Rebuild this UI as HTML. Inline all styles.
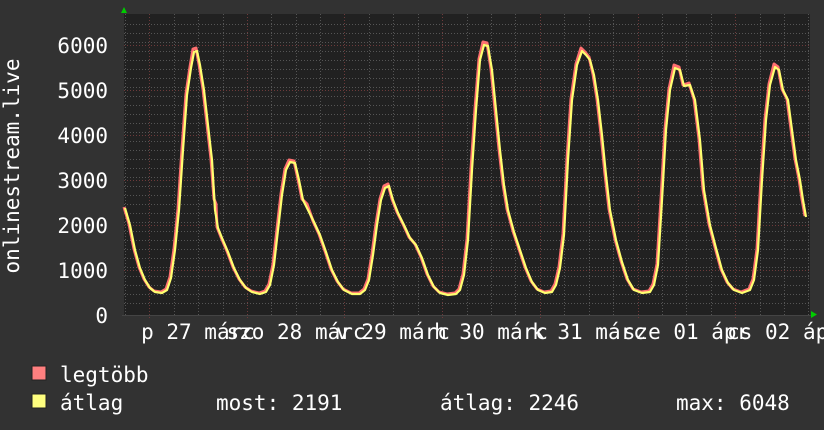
<!DOCTYPE html>
<html><head><meta charset="utf-8"><style>
html,body{margin:0;padding:0;background:#333;}
svg{display:block}
text{font-family:"DejaVu Sans Mono","Liberation Mono",monospace;font-size:21px;fill:#fff;}
</style></head><body>
<svg width="824" height="430" viewBox="0 0 824 430" xmlns="http://www.w3.org/2000/svg">
<rect width="824" height="430" fill="#323232"/>
<rect x="124" y="14" width="686" height="301" fill="#212121"/>
<g stroke="#555" stroke-width="1" stroke-dasharray="1,2" shape-rendering="crispEdges">
<path d="M124 24.5H810M124 33.5H810M124 42.5H810M124 51.5H810M124 60.5H810M124 69.5H810M124 78.5H810M124 87.5H810M124 96.5H810M124 105.5H810M124 114.5H810M124 123.5H810M124 132.5H810M124 141.5H810M124 150.5H810M124 159.5H810M124 168.5H810M124 177.5H810M124 186.5H810M124 195.5H810M124 204.5H810M124 213.5H810M124 222.5H810M124 231.5H810M124 240.5H810M124 249.5H810M124 258.5H810M124 267.5H810M124 276.5H810M124 285.5H810M124 294.5H810M124 303.5H810"/>
<path d="M125.5 14V315M174.5 14V315M198.5 14V315M223.5 14V315M271.5 14V315M296.5 14V315M320.5 14V315M369.5 14V315M393.5 14V315M418.5 14V315M467.5 14V315M491.5 14V315M515.5 14V315M564.5 14V315M589.5 14V315M613.5 14V315M662.5 14V315M686.5 14V315M711.5 14V315M760.5 14V315M784.5 14V315M808.5 14V315"/>
</g>
<g stroke="#6e3a3a" stroke-width="1" stroke-dasharray="1,2" shape-rendering="crispEdges">
<path d="M124 45.5H810M124 90.5H810M124 135.5H810M124 180.5H810M124 225.5H810M124 270.5H810"/>
<path d="M149.5 14V318M247.5 14V318M344.5 14V318M442.5 14V318M540.5 14V318M638.5 14V318M735.5 14V318"/>
</g>
<line x1="122" y1="315.5" x2="812" y2="315.5" stroke="#444"/>
<polygon points="121,13 127,13 124,7" fill="#0c0"/>
<polygon points="811,311 811,318 817,314.5" fill="#0c0"/>
<g fill="none" stroke-linejoin="round">
<polyline stroke="#ff7070" stroke-width="3" transform="translate(-1,-1)" points="125,208 130,225 135,250 140,268 145,280 150,288 155,292 162,293 167,290 171,278 175,250 179,210 183,150 187,95 191,68 194,50 197,49 200,65 204,90 208,125 212,160 215,200 217,205 218,228 222,238 228,252 234,268 240,280 246,288 252,292 260,294 266,292 270,285 274,265 278,230 282,195 286,170 290,161 295,162 299,180 303,200 308,205 314,222 320,235 326,252 332,270 338,282 344,290 352,294 360,294 365,290 369,280 373,255 377,225 381,200 385,187 389,185 393,200 398,213 404,225 410,238 416,245 422,258 428,275 434,287 440,293 448,295 456,294 460,290 464,275 468,240 472,170 476,110 480,60 484,43 488,44 492,70 496,110 500,150 504,185 508,210 514,232 520,250 526,268 532,282 538,290 545,293 552,292 556,285 560,268 564,235 568,160 572,100 577,65 582,49 586,53 590,58 594,75 598,100 602,135 606,175 610,210 616,240 622,262 628,280 634,290 642,293 650,292 654,285 658,265 662,200 666,130 670,90 675,66 680,68 684,86 690,84 695,100 700,140 704,190 710,225 716,248 722,270 728,283 734,290 742,293 750,290 754,280 758,250 762,180 766,120 770,85 775,65 779,68 783,90 788,100 792,130 796,160 800,180 803,200 806,217"/>
<polyline stroke="#ffff70" stroke-width="2.2" points="125,208 130,225 135,250 140,268 145,280 150,288 155,292 162,293 167,290 171,278 175,250 179,210 183,150 187,95 191,68 194,52 197,51 200,65 204,90 208,125 212,160 215,210 218,228 222,238 228,252 234,268 240,280 246,288 252,292 260,294 266,292 270,285 274,265 278,230 282,195 286,170 290,162 295,163 299,180 303,200 308,210 314,222 320,235 326,252 332,270 338,282 344,290 352,294 360,294 365,290 369,280 373,255 377,225 381,200 385,188 389,186 393,200 398,213 404,225 410,238 416,245 422,258 428,275 434,287 440,293 448,295 456,294 460,290 464,275 468,240 472,170 476,110 480,60 484,45 488,46 492,70 496,110 500,150 504,185 508,210 514,232 520,250 526,268 532,282 538,290 545,293 552,292 556,285 560,268 564,235 568,160 572,100 577,65 582,51 586,55 590,60 594,75 598,100 602,135 606,175 610,210 616,240 622,262 628,280 634,290 642,293 650,292 654,285 658,265 662,200 666,130 670,90 675,68 680,70 684,86 690,85 695,100 700,140 704,190 710,225 716,248 722,270 728,283 734,290 742,293 750,290 754,280 758,250 762,180 766,120 770,85 775,67 779,70 783,90 788,100 792,130 796,160 800,180 803,200 806,217"/>
</g>
<g text-anchor="end">
<text x="108" y="53">6000</text>
<text x="108" y="98">5000</text>
<text x="108" y="143">4000</text>
<text x="108" y="188">3000</text>
<text x="108" y="233">2000</text>
<text x="108" y="278">1000</text>
<text x="108" y="323">0</text>
</g>
<text transform="translate(19,166) rotate(-90)" text-anchor="middle">onlinestream.live</text>
<g text-anchor="middle">
<text x="198" y="339">p 27 márc</text>
<text x="296" y="339">szo 28 márc</text>
<text x="393" y="339">v 29 márc</text>
<text x="491" y="339">h 30 márc</text>
<text x="589" y="339">k 31 márc</text>
<text x="686" y="339">sze 01 ápr</text>
<text x="784" y="339">cs 02 ápr</text>
</g>
<rect x="32" y="366" width="14" height="14" fill="#ff7f7f" stroke="#222"/>
<rect x="32" y="394" width="14" height="14" fill="#ffff7f" stroke="#222"/>
<text x="60" y="382">legtöbb</text>
<text x="60" y="410">átlag</text>
<text x="216" y="410">most: 2191</text>
<text x="440" y="410">átlag: 2246</text>
<text x="676" y="410">max: 6048</text>
</svg>
</body></html>
